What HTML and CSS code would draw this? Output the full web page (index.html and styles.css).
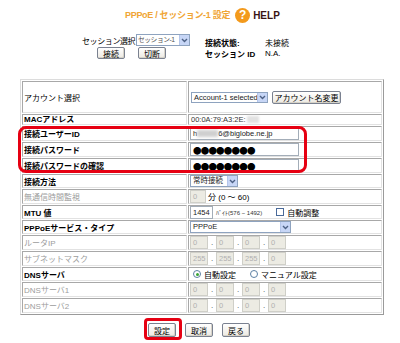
FILE: index.html
```html
<!DOCTYPE html>
<html lang="ja">
<head>
<meta charset="utf-8">
<title>PPPoE / セッション-1 設定</title>
<link rel="stylesheet" href="styles.css">
</head>
<body>
<div class="page">
  <div class="title-row">
    <h1 class="title">PPPoE / セッション-1 設定</h1>
    <span class="help-icon">?</span>
    <span class="help">HELP</span>
  </div>

  <div class="session">
    <div class="session-left">
      <div class="sel-row">
        <span class="sel-label">セッション選択</span>
        <span class="sel w54"><span class="sel-text tight">セッション-1</span><span class="arrow"><svg width="7" height="5" viewBox="0 0 7 5"><path d="M1 1 L3.5 3.5 L6 1" fill="none" stroke="#4d6185" stroke-width="1.4"/></svg></span></span>
      </div>
      <div class="btn-row">
        <span class="btn">接続</span>
        <span class="btn">切断</span>
      </div>
    </div>
    <div class="status">
      <span class="st-k">接続状態:</span><span class="st-v">未接続</span>
      <span class="st-k">セッション ID</span><span class="st-v">N.A.</span>
    </div>
  </div>

  <table class="form">
    <tr class="tall">
      <td class="lbl norm"><div class="c">アカウント選択</div></td>
      <td><div class="c v">
        <span class="sel acct"><span class="sel-text">Account-1 selected</span><span class="arrow"><svg width="7" height="5" viewBox="0 0 7 5"><path d="M1 1 L3.5 3.5 L6 1" fill="none" stroke="#4d6185" stroke-width="1.4"/></svg></span></span>
        <span class="btn btn-wide">アカウント名変更</span>
      </div></td>
    </tr>
    <tr class="mac">
      <td class="lbl"><div class="c">MACアドレス</div></td>
      <td><div class="c v"><span class="mac-text">00:0A:79:A3:2E:</span><span class="blur-box"></span></div></td>
    </tr>
    <tr>
      <td class="lbl"><div class="c">接続ユーザーID</div></td>
      <td><div class="c"><span class="inp wide"><span>h</span><span class="blur-in"></span><span>6@biglobe.ne.jp</span></span></div></td>
    </tr>
    <tr>
      <td class="lbl"><div class="c">接続パスワード</div></td>
      <td><div class="c"><span class="inp wide pw">●●●●●●●●</span></div></td>
    </tr>
    <tr>
      <td class="lbl"><div class="c">接続パスワードの確認</div></td>
      <td><div class="c"><span class="inp wide pw">●●●●●●●●</span></div></td>
    </tr>
    <tr class="s">
      <td class="lbl"><div class="c">接続方法</div></td>
      <td><div class="c v"><span class="sel w48"><span class="sel-text">常時接続</span><span class="arrow"><svg width="7" height="5" viewBox="0 0 7 5"><path d="M1 1 L3.5 3.5 L6 1" fill="none" stroke="#4d6185" stroke-width="1.4"/></svg></span></span></div></td>
    </tr>
    <tr>
      <td class="lbl dis"><div class="c">無通信時間監視</div></td>
      <td><div class="c"><span class="inp dis w16">0</span><span class="unit">分 (0 〜 60)</span></div></td>
    </tr>
    <tr class="s">
      <td class="lbl"><div class="c">MTU 値</div></td>
      <td><div class="c"><span class="inp w23">1454</span><span class="small">ﾊﾞｲﾄ(576 − 1492)</span><span class="chk"></span><span class="chk-label">自動調整</span></div></td>
    </tr>
    <tr class="s">
      <td class="lbl"><div class="c">PPPoEサービス・タイプ</div></td>
      <td><div class="c v"><span class="sel w101"><span class="sel-text">PPPoE</span><span class="arrow"><svg width="7" height="5" viewBox="0 0 7 5"><path d="M1 1 L3.5 3.5 L6 1" fill="none" stroke="#4d6185" stroke-width="1.4"/></svg></span></span></div></td>
    </tr>
    <tr>
      <td class="lbl dis"><div class="c">ルータIP</div></td>
      <td><div class="c"><span class="inp dis ip">0</span><span class="dot">.</span><span class="inp dis ip">0</span><span class="dot">.</span><span class="inp dis ip">0</span><span class="dot">.</span><span class="inp dis ip">0</span></div></td>
    </tr>
    <tr>
      <td class="lbl dis"><div class="c">サブネットマスク</div></td>
      <td><div class="c"><span class="inp dis ip">255</span><span class="dot">.</span><span class="inp dis ip">255</span><span class="dot">.</span><span class="inp dis ip">255</span><span class="dot">.</span><span class="inp dis ip">0</span></div></td>
    </tr>
    <tr class="s">
      <td class="lbl"><div class="c">DNSサーバ</div></td>
      <td><div class="c v"><span class="radio on"></span><span class="r-label">自動設定</span><span class="radio"></span><span class="r-label">マニュアル設定</span></div></td>
    </tr>
    <tr>
      <td class="lbl dis"><div class="c">DNSサーバ1</div></td>
      <td><div class="c"><span class="inp dis ip">0</span><span class="dot">.</span><span class="inp dis ip">0</span><span class="dot">.</span><span class="inp dis ip">0</span><span class="dot">.</span><span class="inp dis ip">0</span></div></td>
    </tr>
    <tr>
      <td class="lbl dis"><div class="c">DNSサーバ2</div></td>
      <td><div class="c"><span class="inp dis ip">0</span><span class="dot">.</span><span class="inp dis ip">0</span><span class="dot">.</span><span class="inp dis ip">0</span><span class="dot">.</span><span class="inp dis ip">0</span></div></td>
    </tr>
  </table>

  <div class="actions">
    <span class="btn act">設定</span>
    <span class="btn act">取消</span>
    <span class="btn act">戻る</span>
  </div>

  <div class="mark mark-fields"></div>
  <div class="mark mark-save"></div>
</div>
</body>
</html>
```

FILE: styles.css
```css
html, body {
  margin: 0;
  padding: 0;
  background: #fff;
}
body {
  font-family: "Liberation Sans", "Noto Sans CJK JP", sans-serif;
  font-size: 8px;
  color: #000;
}
.page {
  position: relative;
  width: 400px;
  height: 343px;
  overflow: hidden;
}

/* Title */
.title-row {
  display: flex;
  align-items: center;
  height: 15px;
  margin-top: 8px;
  padding-left: 125px;
}
.title {
  margin: 0;
  font-size: 9px;
  letter-spacing: -0.3px;
  font-weight: bold;
  color: #f0a535;
  line-height: 15px;
  white-space: nowrap;
}
.help-icon {
  width: 15px;
  height: 15px;
  border-radius: 50%;
  background: #f39a1c;
  color: #fff;
  font-weight: bold;
  font-size: 12px;
  line-height: 15px;
  text-align: center;
  margin-left: 5px;
}
.help {
  margin-left: 3px;
  font-size: 10px;
  font-weight: bold;
  color: #3a1414;
  line-height: 15px;
}

/* Session block */
.session {
  display: flex;
  margin-top: 11px;
  padding-left: 82px;
}
.session-left {
  width: 108px;
}
.sel-row {
  display: flex;
  align-items: center;
  height: 12px;
}
.sel-label {
  white-space: nowrap;
  letter-spacing: -0.4px;
  width: 54px;
}
.btn-row {
  display: flex;
  gap: 13px;
  padding-left: 15px;
  margin-top: 1px;
}
.status {
  display: grid;
  grid-template-columns: 60px auto;
  grid-auto-rows: 11px;
  align-items: center;
  margin-left: 15px;
  margin-top: 3px;
}
.st-k {
  font-weight: bold;
  white-space: nowrap;
}
.st-v {
  white-space: nowrap;
}

/* Controls */
.sel {
  display: inline-flex;
  box-sizing: border-box;
  height: 12px;
  border: 1px solid #8ea3bf;
  background: #fff;
  align-items: stretch;
}
.sel-text {
  flex: 1;
  padding-left: 2px;
  font-size: 7.5px;
  line-height: 10px;
  white-space: nowrap;
  overflow: hidden;
  color: #222;
}
.sel-text.tight {
  font-size: 6.8px;
  letter-spacing: -0.5px;
  padding-left: 1px;
  color: #555;
}
.arrow {
  width: 9px;
  flex: none;
  background: #c7d6f6;
  border-left: 1px solid #b4c6ea;
  display: flex;
  align-items: center;
  justify-content: center;
}
.w54 { width: 54px; }
.w48 { width: 48px; }
.w101 { width: 101px; }
.acct { width: 77px; height: 11px; margin-left: 1px; }

.btn {
  display: inline-flex;
  align-items: center;
  justify-content: center;
  box-sizing: border-box;
  width: 28px;
  height: 12px;
  border: 1px solid #7a8190;
  border-radius: 2px;
  background: linear-gradient(#ffffff, #ece9e2);
  box-shadow: inset -1px -1px 0 #d6d2c8;
  font-size: 8px;
  white-space: nowrap;
}
.btn-wide {
  width: 69px;
  height: 13px;
  margin-left: 4px;
}

.inp {
  display: inline-flex;
  align-items: center;
  box-sizing: border-box;
  height: 13px;
  border: 1px solid #a3adb8;
  background: #fff;
  padding-left: 2px;
  font-size: 7.5px;
  white-space: nowrap;
  overflow: hidden;
  color: #222;
}
.wide { width: 109px; }
.pw {
  font-family: "Noto Sans CJK JP", sans-serif;
  font-size: 8.5px;
  letter-spacing: -0.8px;
  color: #000;
  padding-left: 2px;
}
.blur-in {
  display: inline-block;
  width: 21px;
  height: 7px;
  background: #cfcfcf;
  filter: blur(1.5px);
}
.inp.dis {
  background: #ecebe3;
  border-color: #cfcfc8;
  color: #b0b0b0;
}
.w16 { width: 16px; }
.w23 { width: 23px; }
.ip { width: 18px; }
.dot {
  width: 8px;
  text-align: center;
  color: #444;
}
.unit {
  margin-left: 2px;
  white-space: nowrap;
}
.small {
  font-size: 6px;
  margin-left: 3px;
  white-space: nowrap;
  color: #333;
}
.chk {
  display: inline-block;
  box-sizing: border-box;
  width: 8px;
  height: 8px;
  border: 1px solid #4a6a9a;
  background: #fff;
  margin-left: 14px;
}
.chk-label {
  margin-left: 3px;
  white-space: nowrap;
}
.radio {
  display: inline-block;
  box-sizing: border-box;
  width: 8px;
  height: 8px;
  border: 1px solid #5c7fa3;
  border-radius: 50%;
  background: #fff;
  position: relative;
  margin-left: 3px;
}
.radio.on::after {
  content: "";
  position: absolute;
  left: 1.5px;
  top: 1.5px;
  width: 3px;
  height: 3px;
  border-radius: 50%;
  background: #3aa535;
}
.r-label {
  margin-left: 3px;
  margin-right: 11px;
  white-space: nowrap;
}

/* Form table */
.form {
  margin-top: 20px;
  margin-left: 20px;
  width: 364px;
  table-layout: fixed;
  border-collapse: separate;
  border-spacing: 1px;
  border: 1px solid;
  border-color: #dcdcdc #9a9a9a #9a9a9a #dcdcdc;
}
.form td {
  padding: 0;
  border: 1px solid;
  border-color: #a8a8a8 #e2e2e2 #e2e2e2 #a8a8a8;
  vertical-align: middle;
}
.form td.lbl {
  width: 165px;
  box-sizing: border-box;
}
.c {
  height: 13px;
  display: flex;
  align-items: center;
  padding-left: 1px;
  white-space: nowrap;
}
.c.v { padding-left: 1px; }
.tall .c { height: 30px; }
.mac .c { height: 9px; line-height: 9px; }
.s .c { height: 12px; }
.lbl {
  font-weight: bold;
}
.lbl.norm {
  font-weight: normal;
}
.lbl.dis {
  font-weight: normal;
  color: #9c9c9c;
}
.mac-text {
  color: #333;
  font-size: 7.5px;
  margin-left: 1px;
}
.blur-box {
  display: inline-block;
  width: 12px;
  height: 7px;
  background: #e2e2e2;
  filter: blur(1px);
  margin-left: 1px;
}

/* Actions */
.actions {
  display: flex;
  justify-content: center;
  gap: 9px;
  margin-top: 8px;
  padding-right: 2px;
}
.act {
  width: 28px;
  height: 14px;
}

/* Red highlight marks */
.mark {
  position: absolute;
  box-sizing: border-box;
  border: 3px solid #e60012;
}
.mark-fields {
  left: 18px;
  top: 126px;
  width: 289px;
  height: 47px;
  border-radius: 8px;
}
.mark-save {
  left: 144px;
  top: 318px;
  width: 38px;
  height: 22px;
  border-radius: 4px;
}
```
